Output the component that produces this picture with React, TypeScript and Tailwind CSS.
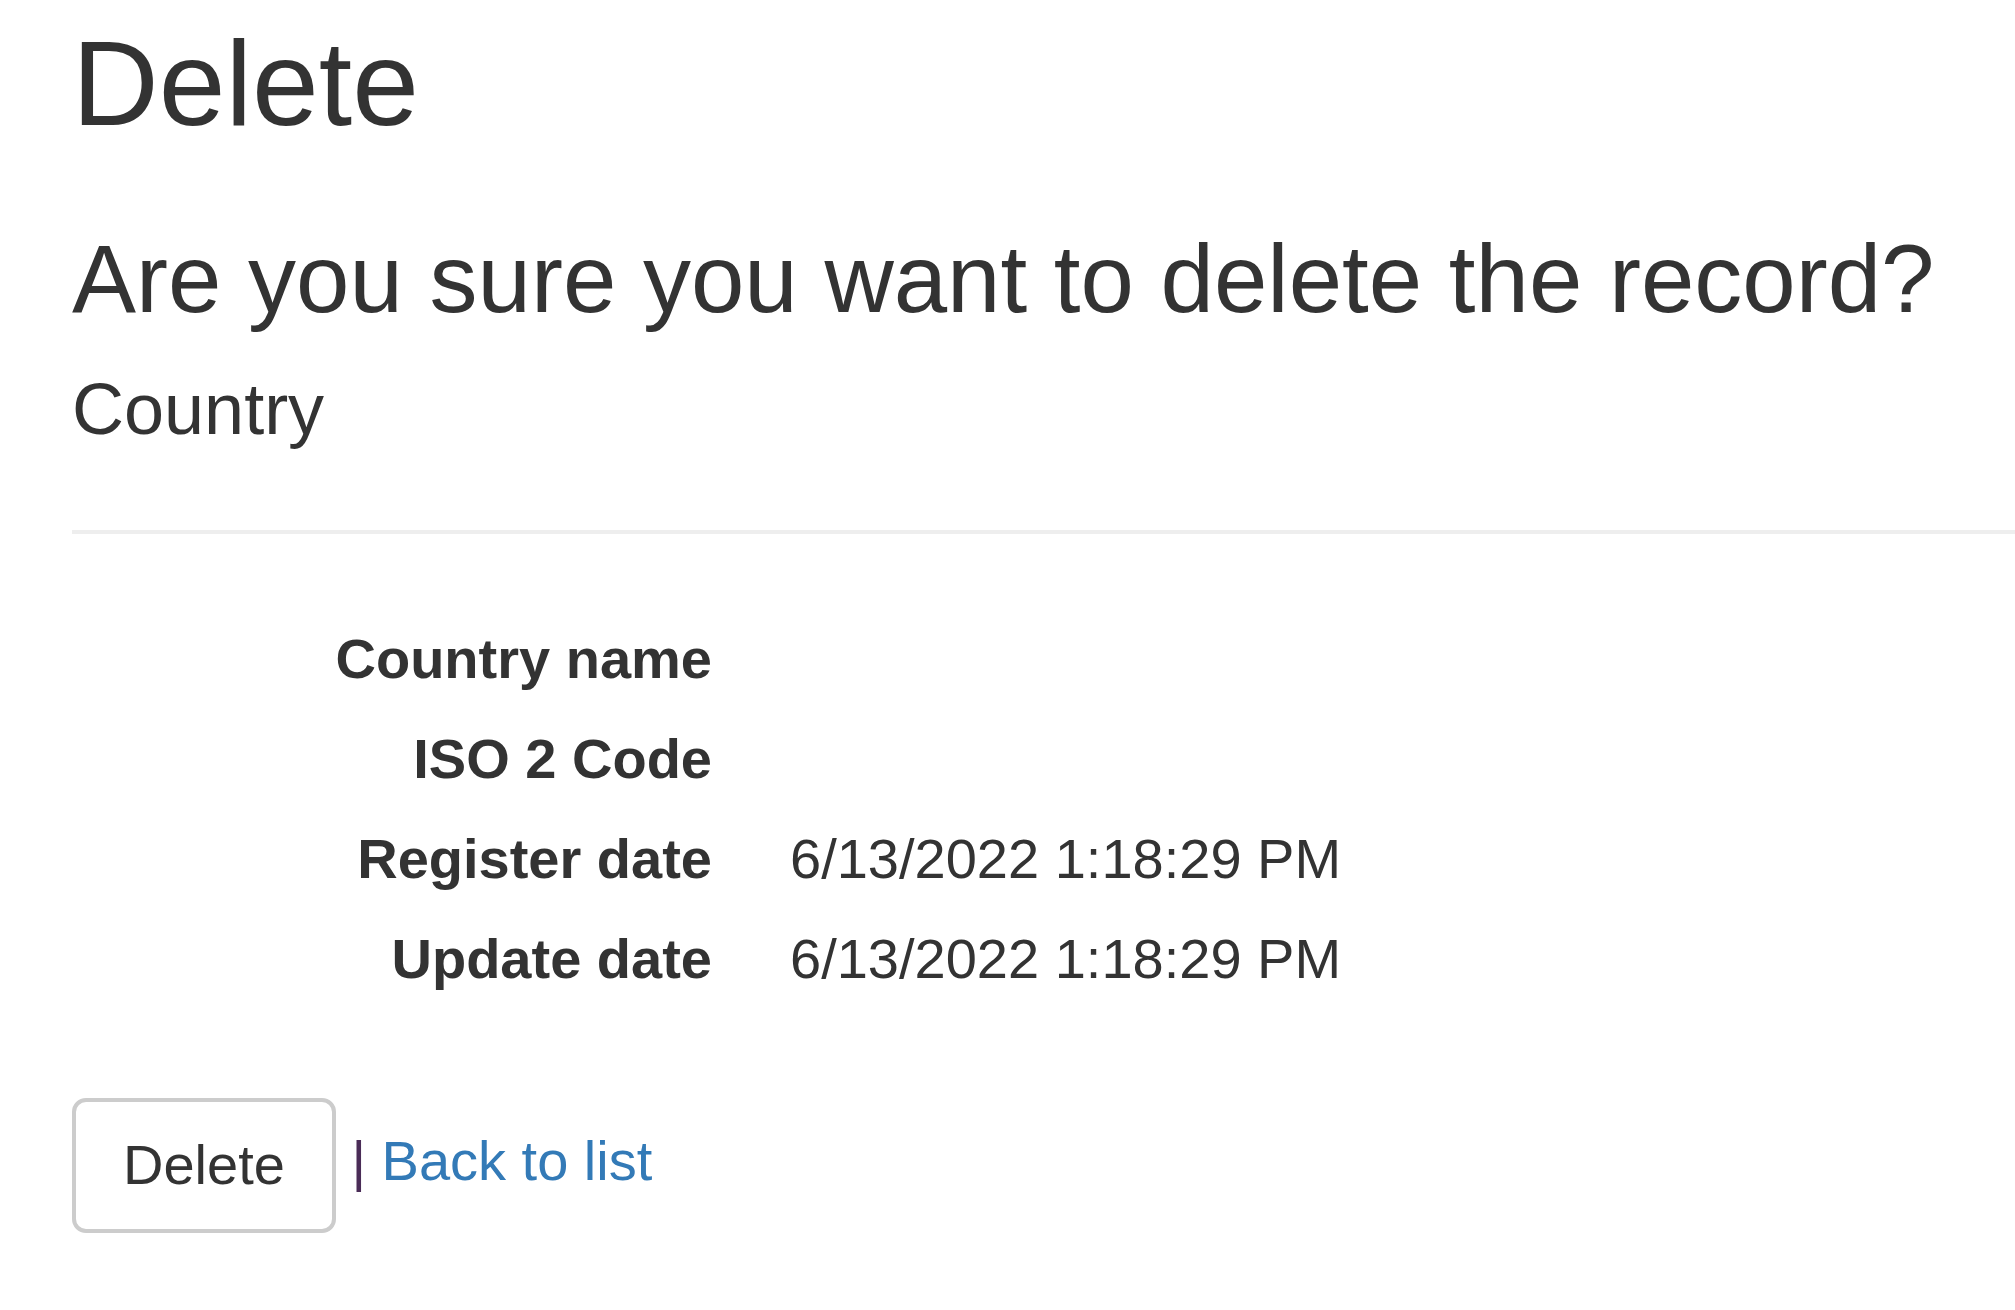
import React from "react"

const rows = [
  { label: "Country name", value: "" },
  { label: "ISO 2 Code", value: "" },
  { label: "Register date", value: "6/13/2022 1:18:29 PM" },
  { label: "Update date", value: "6/13/2022 1:18:29 PM" },
]

const App = () => {
  return (
    <div className="min-h-screen bg-white pl-[72px] font-['Liberation_Sans',Arial,sans-serif] text-[#333] overflow-hidden">
      <h2 className="pt-[17px] text-[120px] leading-[132px] font-normal">Delete</h2>
      <h3 className="mt-[77px] text-[96px] leading-[105.6px] font-normal whitespace-nowrap">
        Are you sure you want to delete the record?
      </h3>
      <h4 className="mt-[38px] text-[72px] leading-[79.2px] font-normal">Country</h4>
      <hr className="mt-[81px] border-0 border-t-4 border-[#eee]" />
      <dl className="mt-[75px] text-[56px] leading-[100px]">
        {rows.map((r) => (
          <div key={r.label} className="flex h-[100px]">
            <dt className="w-[640px] text-right font-bold whitespace-nowrap">{r.label}</dt>
            <dd className="ml-[78px] whitespace-nowrap">{r.value}</dd>
          </div>
        ))}
      </dl>
      <div className="mt-[89px] text-[56px] leading-[80px] whitespace-nowrap">
        <button className="h-[135px] px-[47px] border-4 border-[#ccc] rounded-[14px] bg-white text-[#333] align-middle">
          Delete
        </button>{" "}
        <span className="text-[#4a2c57]">|</span>{" "}
        <a href="#" className="text-[#337ab7]">Back to list</a>
      </div>
    </div>
  )
}

export default App
